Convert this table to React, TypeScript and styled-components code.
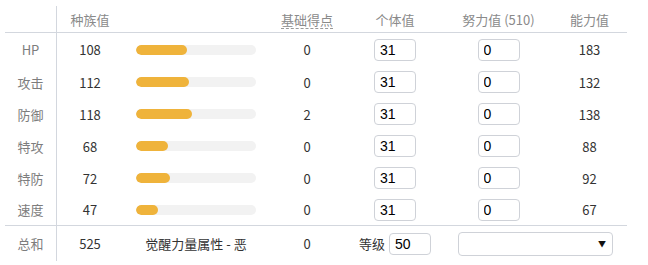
import React from "react";
import styled, { createGlobalStyle } from "styled-components";

const Global = createGlobalStyle`
  html, body { margin: 0; padding: 0; background: #fff; }
  body { font-family: "Noto Sans CJK SC", "Noto Sans", sans-serif; }
`;

const COLS = "52px 66px 146px 76px 100px 107px 75px";

const Table = styled.div`
  margin: 6px 0 0 5px;
  width: 622px;
  display: grid;
  grid-template-columns: ${COLS};
  font-size: 13px;
  color: #333;
`;

const Cell = styled.div<{ $h: number; $first?: boolean; $line?: boolean; $align?: string }>`
  height: ${(p) => p.$h}px;
  display: flex;
  align-items: center;
  justify-content: ${(p) => p.$align || "center"};
  box-sizing: border-box;
  border-right: ${(p) => (p.$first ? "1px solid #d3d7de" : "none")};
  border-bottom: ${(p) => (p.$line ? "1px solid #d3d7de" : "none")};
`;

const HeadText = styled.span`
  color: #8a8a8a;
  font-size: 13px;
  line-height: 1;
`;

const DashedHead = styled(HeadText)`
  border-bottom: 1px dashed #999;
  padding-bottom: 2px;
  margin-top: 3px;
`;

const Label = styled.span`
  color: #7d7d7d;
`;

const Bar = styled.div`
  width: 120px;
  height: 10px;
  border-radius: 5px;
  background: #f2f2f2;
  overflow: hidden;
`;

const Fill = styled.div`
  height: 100%;
  border-radius: 5px;
  background: #efb33b;
`;

const NumInput = styled.input`
  width: 42px;
  height: 22px;
  box-sizing: border-box;
  border: 1px solid #cfd2d8;
  border-radius: 4px;
  padding: 0 5px;
  font-family: "Liberation Sans", Arial, sans-serif;
  font-size: 14px;
  color: #000;
  outline: none;
`;

const Level = styled.div`
  display: flex;
  align-items: center;
  gap: 4px;
  padding-left: 14px;
`;

const Select = styled.div`
  width: 155px;
  height: 24px;
  box-sizing: border-box;
  border: 1px solid #cfd2d8;
  border-radius: 4px;
  display: flex;
  align-items: center;
  justify-content: flex-end;
  padding-right: 6px;
  font-size: 8px;
  color: #111;
  margin-left: 13px;
`;

const SpanCell = styled(Cell)`
  grid-column: span 2;
`;

const stats = [
  { name: "HP", base: 108, ev0: 0, iv: 31, ev: 0, val: 183 },
  { name: "攻击", base: 112, ev0: 0, iv: 31, ev: 0, val: 132 },
  { name: "防御", base: 118, ev0: 2, iv: 31, ev: 0, val: 138 },
  { name: "特攻", base: 68, ev0: 0, iv: 31, ev: 0, val: 88 },
  { name: "特防", base: 72, ev0: 0, iv: 31, ev: 0, val: 92 },
  { name: "速度", base: 47, ev0: 0, iv: 31, ev: 0, val: 67 },
];

export default function App() {
  return (
    <>
      <Global />
      <Table>
        <Cell $h={27} $first $line />
        <Cell $h={27} $line><HeadText>种族值</HeadText></Cell>
        <Cell $h={27} $line />
        <Cell $h={27} $line><DashedHead>基础得点</DashedHead></Cell>
        <Cell $h={27} $line><HeadText>个体值</HeadText></Cell>
        <Cell $h={27} $line><HeadText>努力值 (510)</HeadText></Cell>
        <Cell $h={27} $line><HeadText>能力值</HeadText></Cell>
        {stats.map((s, i) => {
          const last = i === stats.length - 1;
          const h = i === 0 ? 33 : 32;
          return (
            <React.Fragment key={s.name}>
              <Cell $h={h} $first $line={last}><Label>{s.name}</Label></Cell>
              <Cell $h={h} $line={last}>{s.base}</Cell>
              <Cell $h={h} $line={last}>
                <Bar><Fill style={{ width: `${(s.base / 255) * 120}px` }} /></Bar>
              </Cell>
              <Cell $h={h} $line={last}>{s.ev0}</Cell>
              <Cell $h={h} $line={last}><NumInput defaultValue={s.iv} /></Cell>
              <Cell $h={h} $line={last}><NumInput defaultValue={s.ev} /></Cell>
              <Cell $h={h} $line={last}>{s.val}</Cell>
            </React.Fragment>
          );
        })}
        <Cell $h={35} $first><Label>总和</Label></Cell>
        <Cell $h={35}>525</Cell>
        <Cell $h={35}>觉醒力量属性 - 恶</Cell>
        <Cell $h={35}>0</Cell>
        <Cell $h={35} $align="flex-start">
          <Level>
            <span>等级</span>
            <NumInput defaultValue={50} />
          </Level>
        </Cell>
        <SpanCell $h={35} $align="flex-start">
          <Select>▼</Select>
        </SpanCell>
      </Table>
    </>
  );
}
